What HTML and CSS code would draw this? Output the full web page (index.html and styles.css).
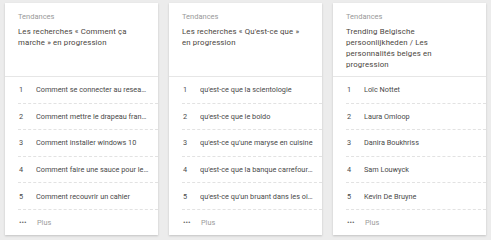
FILE: index.html
```html
<!DOCTYPE html>
<html>
<head>
<meta charset="utf-8">
<link rel="stylesheet" href="styles.css">
</head>
<body>
<div class="cards">
  <div class="card">
    <div class="head">
      <div class="kicker">Tendances</div>
      <div class="title">Les recherches « Comment ça marche » en progression</div>
    </div>
    <ol class="list">
      <li><span class="num">1</span><span class="txt">Comment se connecter au reseau wifi</span></li>
      <li><span class="num">2</span><span class="txt">Comment mettre le drapeau français</span></li>
      <li><span class="num">3</span><span class="txt">Comment installer windows 10</span></li>
      <li><span class="num">4</span><span class="txt">Comment faire une sauce pour les pâtes</span></li>
      <li><span class="num">5</span><span class="txt">Comment recouvrir un cahier</span></li>
    </ol>
    <div class="more"><span class="dots">•••</span><span>Plus</span></div>
  </div>
  <div class="card">
    <div class="head">
      <div class="kicker">Tendances</div>
      <div class="title">Les recherches « Qu'est-ce que » en progression</div>
    </div>
    <ol class="list">
      <li><span class="num">1</span><span class="txt">qu'est-ce que la scientologie</span></li>
      <li><span class="num">2</span><span class="txt">qu'est-ce que le boldo</span></li>
      <li><span class="num">3</span><span class="txt">qu'est-ce qu'une maryse en cuisine</span></li>
      <li><span class="num">4</span><span class="txt">qu'est-ce que la banque carrefour des entreprises</span></li>
      <li><span class="num">5</span><span class="txt">qu'est-ce qu'un bruant dans les oiseaux</span></li>
    </ol>
    <div class="more"><span class="dots">•••</span><span>Plus</span></div>
  </div>
  <div class="card">
    <div class="head">
      <div class="kicker">Tendances</div>
      <div class="title">Trending Belgische persoonlijkheden / Les personnalités belges en progression</div>
    </div>
    <ol class="list">
      <li><span class="num">1</span><span class="txt">Loïc Nottet</span></li>
      <li><span class="num">2</span><span class="txt">Laura Omloop</span></li>
      <li><span class="num">3</span><span class="txt">Danira Boukhriss</span></li>
      <li><span class="num">4</span><span class="txt">Sam Louwyck</span></li>
      <li><span class="num">5</span><span class="txt">Kevin De Bruyne</span></li>
    </ol>
    <div class="more"><span class="dots">•••</span><span>Plus</span></div>
  </div>
</div>
</body>
</html>
```
FILE: styles.css
```css
html, body {
  margin: 0;
  padding: 0;
  background: #ececec;
  font-family: Roboto, "Liberation Sans", sans-serif;
  width: 491px;
  height: 240px;
  overflow: hidden;
}
.cards {
  display: flex;
  gap: 11px;
  padding: 3px 0 0 5px;
}
.card {
  width: 153px;
  height: 232px;
  flex: none;
  background: #fff;
  box-shadow: 0 1px 2px rgba(0,0,0,0.18);
  display: flex;
  flex-direction: column;
}
.head {
  padding: 9px 0 0 13px;
  border-bottom: 1px solid #e6e6e6;
  box-sizing: border-box;
  height: 74px;
}
.kicker {
  font-size: 7.5px;
  color: #999;
  line-height: 9px;
}
.title {
  width: 122px;
  margin-top: 5px;
  font-size: 7.8px;
  letter-spacing: 0.15px;
  line-height: 11px;
  color: #4a4540;
}
.list {
  list-style: none;
  margin: 0;
  padding: 0 0 0 13px;
}
.list li {
  height: 26.6px;
  display: flex;
  align-items: center;
  border-bottom: 1px dashed #e2e2e2;
  box-sizing: border-box;
  font-size: 7.3px;
  color: #4a4a4a;
}
.num {
  width: 17px;
  flex: none;
  padding-left: 1px;
}
.txt {
  white-space: nowrap;
  overflow: hidden;
  text-overflow: ellipsis;
  padding-right: 8px;
}
.more {
  flex: 1;
  display: flex;
  align-items: center;
  padding-left: 14px;
  font-size: 7.3px;
  color: #9a9a9a;
}
.dots {
  width: 18px;
  font-size: 7.5px;
  letter-spacing: 0;
  color: #666;
}
```
